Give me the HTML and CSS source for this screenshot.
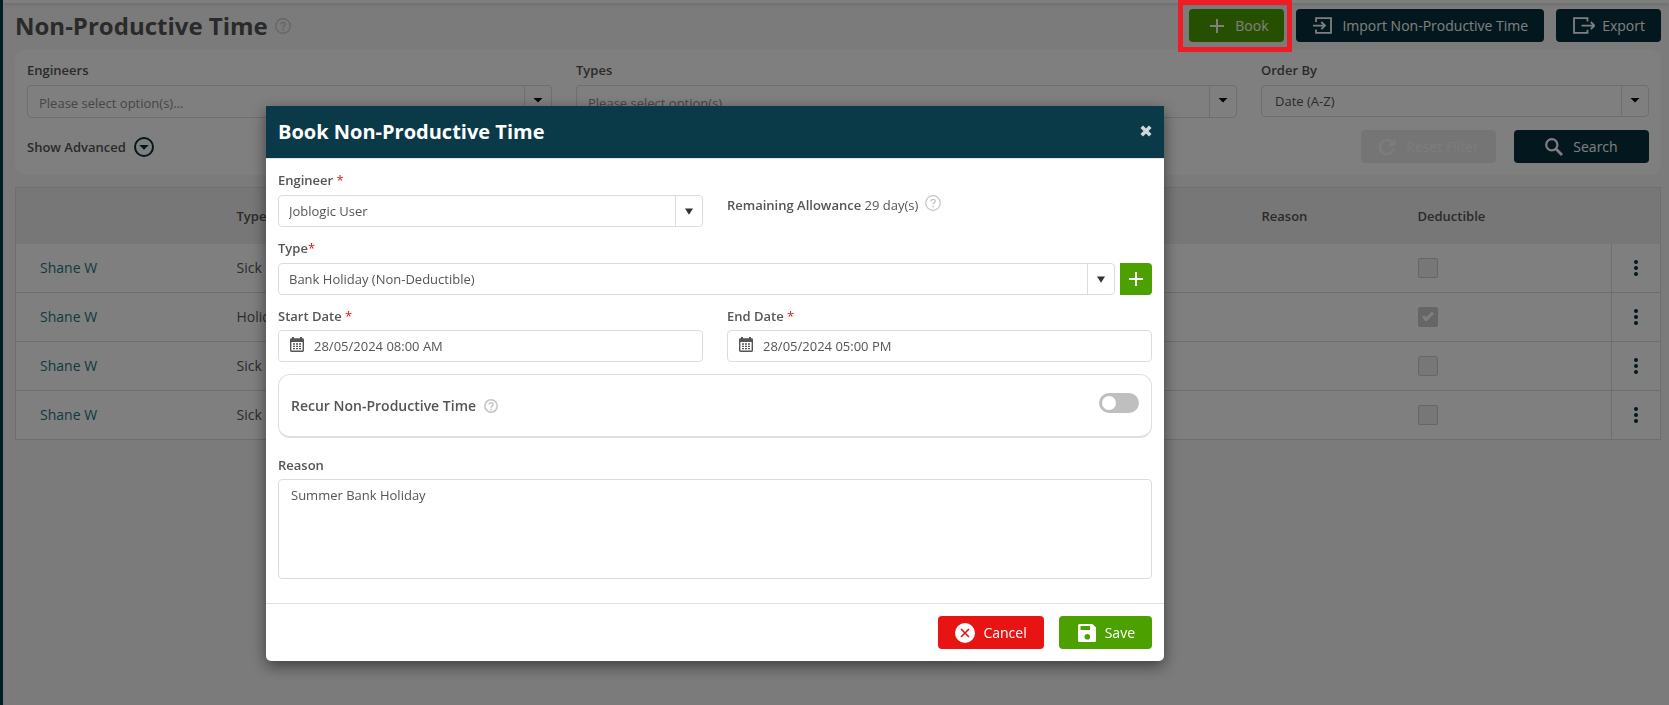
FILE: index.html
```html
<!DOCTYPE html>
<html lang="en">
<head>
<meta charset="utf-8">
<meta name="viewport" content="width=device-width, initial-scale=1">
<title>Non-Productive Time</title>
<link rel="stylesheet" href="styles.css">
</head>
<body>
<svg class="sprite" aria-hidden="true">
  <symbol id="help" viewBox="0 0 16 16"><circle cx="8" cy="8" r="7.3" fill="none" stroke="currentColor" stroke-width="1.2"/><path d="M5.9 6.4C5.9 3.6 10.2 3.7 10.2 6.3C10.2 7.9 8.1 7.8 8.1 9.6" fill="none" stroke="currentColor" stroke-width="1.3"/><circle cx="8.1" cy="11.6" r=".9" fill="currentColor"/></symbol>
  <symbol id="help-bold" viewBox="0 0 14 14"><circle cx="7" cy="7" r="6.2" fill="none" stroke="currentColor" stroke-width="1.5"/><path d="M5 5.6C5 3 9.1 3.1 9.1 5.5C9.1 6.9 7 7 7 8.8" fill="none" stroke="currentColor" stroke-width="1.4"/><circle cx="7" cy="10.5" r=".9" fill="currentColor"/></symbol>
  <symbol id="plus" viewBox="0 0 16 16"><path d="M8 1V15M1 8H15" fill="none" stroke="currentColor" stroke-width="2"/></symbol>
  <symbol id="caret-wide" viewBox="0 0 10 5"><path d="M.5 0H9.5L5 4.6Z" fill="currentColor"/></symbol>
  <symbol id="caret" viewBox="0 0 8 7"><path d="M0 .5H8L4 6.8Z" fill="currentColor"/></symbol>
  <symbol id="dots" viewBox="0 0 4 16"><circle cx="2" cy="2" r="2"/><circle cx="2" cy="8" r="2"/><circle cx="2" cy="14" r="2"/></symbol>
  <symbol id="calendar" viewBox="0 0 14 15"><path fill="currentColor" fill-rule="evenodd" d="M2 0H4V1.3H10V0H12V1.3H12.6Q14 1.3 14 2.7V13.6Q14 15 12.6 15H1.4Q0 15 0 13.6V2.7Q0 1.3 1.4 1.3H2ZM1.4 5V13.6H12.6V5Z"/><path d="M3 7H5M6 7H8M9 7H11M3 9.3H5M6 9.3H8M9 9.3H11M3 11.6H5M6 11.6H8M9 11.6H11" stroke="currentColor" stroke-width="1.3"/></symbol>
</svg>

<div class="page">
  <div class="topbar"></div>
  <main class="content">
    <header class="heading">
      <h1 class="heading-title">Non-Productive Time</h1>
      <svg class="icon-help heading-help"><use href="#help"/></svg>
      <div class="heading-actions">
        <span class="highlighted"><button class="btn btn-green btn-book" type="button"><svg class="icon-plus"><use href="#plus"/></svg>Book</button></span>
        <button class="btn btn-navy" type="button">
          <svg class="icon-import" viewBox="0 0 20 18"><path d="M4 5V1.2H19V15.8H4V12.5M1 8.6H12.5M9.3 5L13 8.6L9.3 12.2" fill="none" stroke="currentColor" stroke-width="1.8"/></svg>Import Non-Productive Time</button>
        <button class="btn btn-navy btn-export" type="button">
          <svg class="icon-export" viewBox="0 0 23 18"><path d="M15.5 4.6V1.2H2V15.8H15.5V12.7M9.5 8.6H22M18.8 5L22.3 8.6L18.8 12.2" fill="none" stroke="currentColor" stroke-width="1.8"/></svg>Export</button>
      </div>
    </header>

    <form class="filters">
      <div class="filter-grid">
        <div class="field">
          <label class="label" for="engineers">Engineers</label>
          <div class="select select-multi"><select id="engineers" class="control placeholder"><option>Please select option(s)...</option></select><span class="arrow"><svg class="icon-caret-wide"><use href="#caret-wide"/></svg></span></div>
        </div>
        <div class="field">
          <label class="label" for="types">Types</label>
          <div class="select select-multi"><select id="types" class="control placeholder"><option>Please select option(s)...</option></select><span class="arrow"><svg class="icon-caret-wide"><use href="#caret-wide"/></svg></span></div>
        </div>
        <div class="field">
          <label class="label" for="order">Order By</label>
          <div class="select"><select id="order" class="control"><option>Date (A-Z)</option></select><span class="arrow"><svg class="icon-caret-wide"><use href="#caret-wide"/></svg></span></div>
        </div>
      </div>
      <div class="filter-actions">
        <button class="advanced" type="button">Show Advanced<svg class="icon-advanced" viewBox="0 0 20 20"><circle cx="10" cy="10" r="9" fill="none" stroke="currentColor" stroke-width="2"/><path d="M5.2 8H14.8L10 12.8Z" fill="currentColor"/></svg></button>
        <button class="btn btn-wide btn-disabled" type="button" disabled>
          <svg class="icon-18" viewBox="0 0 18 18"><path d="M14.6 5A7 7 0 1 0 15.6 11" fill="none" stroke="currentColor" stroke-width="2.6"/><path d="M17.5 .5V8H10Z" fill="currentColor"/></svg>Reset Filter</button>
        <button class="btn btn-wide btn-navy btn-search" type="button">
          <svg class="icon-18" viewBox="0 0 18 18"><circle cx="6.8" cy="6.8" r="5.6" fill="none" stroke="currentColor" stroke-width="2.2"/><path d="M10.8 10.8L17 17" fill="none" stroke="currentColor" stroke-width="2.8"/></svg>Search</button>
      </div>
    </form>

    <table class="grid">
      <colgroup><col class="col-name"><col><col class="col-reason"><col class="col-deduct"><col class="col-menu"></colgroup>
      <thead><tr><th></th><th>Type</th><th>Reason</th><th>Deductible</th><th></th></tr></thead>
      <tbody>
        <tr><td><a class="link" href="#">Shane W</a></td><td>Sick</td><td></td><td><input class="check" type="checkbox" aria-label="Deductible" disabled></td><td class="menu"><button class="dots" type="button" aria-label="Actions"><svg class="icon-dots"><use href="#dots"/></svg></button></td></tr>
        <tr><td><a class="link" href="#">Shane W</a></td><td>Holiday</td><td></td><td><input class="check" type="checkbox" aria-label="Deductible" checked disabled></td><td class="menu"><button class="dots" type="button" aria-label="Actions"><svg class="icon-dots"><use href="#dots"/></svg></button></td></tr>
        <tr><td><a class="link" href="#">Shane W</a></td><td>Sick</td><td></td><td><input class="check" type="checkbox" aria-label="Deductible" disabled></td><td class="menu"><button class="dots" type="button" aria-label="Actions"><svg class="icon-dots"><use href="#dots"/></svg></button></td></tr>
        <tr><td><a class="link" href="#">Shane W</a></td><td>Sick</td><td></td><td><input class="check" type="checkbox" aria-label="Deductible" disabled></td><td class="menu"><button class="dots" type="button" aria-label="Actions"><svg class="icon-dots"><use href="#dots"/></svg></button></td></tr>
      </tbody>
    </table>
  </main>
</div>

<div class="backdrop">
  <form class="modal" role="dialog" aria-labelledby="modal-title">
    <header class="modal-head">
      <h2 class="modal-title" id="modal-title">Book Non-Productive Time</h2>
      <button class="close" type="button" aria-label="Close"><svg class="icon-close" viewBox="0 0 12 12"><path d="M3 3L9 9M9 3L3 9" stroke="currentColor" stroke-width="3.6" stroke-linecap="square"/></svg></button>
    </header>
    <div class="modal-body">
      <div class="columns">
        <div class="field">
          <label class="label" for="engineer">Engineer <span class="req">*</span></label>
          <div class="select"><select id="engineer" class="control"><option>Joblogic User</option></select><span class="arrow"><svg class="icon-caret"><use href="#caret"/></svg></span></div>
        </div>
        <p class="allowance"><span><b class="strong">Remaining Allowance</b> 29 day(s)</span><svg class="icon-help"><use href="#help"/></svg></p>
      </div>
      <div class="field">
        <label class="label" for="type">Type<span class="req">*</span></label>
        <div class="type-row">
          <div class="select"><select id="type" class="control"><option>Bank Holiday (Non-Deductible)</option></select><span class="arrow"><svg class="icon-caret"><use href="#caret"/></svg></span></div>
          <button class="add" type="button" aria-label="Add type"><svg class="icon-plus"><use href="#plus"/></svg></button>
        </div>
      </div>
      <div class="columns">
        <div class="field">
          <label class="label label-tight" for="start">Start Date <span class="req">*</span></label>
          <div class="date"><svg class="icon-calendar"><use href="#calendar"/></svg><input id="start" class="date-input" type="text" value="28/05/2024 08:00 AM"></div>
        </div>
        <div class="field">
          <label class="label label-tight" for="end">End Date <span class="req">*</span></label>
          <div class="date"><svg class="icon-calendar"><use href="#calendar"/></svg><input id="end" class="date-input" type="text" value="28/05/2024 05:00 PM"></div>
        </div>
      </div>
      <div class="recur">
        <label class="recur-label" for="recur">Recur Non-Productive Time</label>
        <svg class="icon-help-small"><use href="#help-bold"/></svg>
        <input id="recur" class="toggle" type="checkbox" role="switch">
      </div>
      <div class="field">
        <label class="label label-tight" for="reason">Reason</label>
        <textarea id="reason" class="textarea">Summer Bank Holiday</textarea>
      </div>
    </div>
    <footer class="modal-foot">
      <button class="btn btn-red" type="button"><svg class="icon-cancel" viewBox="0 0 20 20"><circle cx="10" cy="10" r="10" fill="#fff"/><path d="M6 6L14 14M14 6L6 14" stroke="#e81414" stroke-width="1.7"/></svg>Cancel</button>
      <button class="btn btn-green btn-save" type="submit"><svg class="icon-18" viewBox="0 0 18 18"><path fill="#fff" fill-rule="evenodd" d="M1.5 0H14.5L18 3.5V16.5Q18 18 16.5 18H1.5Q0 18 0 16.5V1.5Q0 0 1.5 0ZM2.5 2V6H12V2ZM9.3 10A2.8 2.8 0 1 0 9.3 15.6A2.8 2.8 0 1 0 9.3 10Z"/></svg>Save</button>
    </footer>
  </form>
</div>
</body>
</html>
```
FILE: styles.css
```css
*, *::before, *::after { box-sizing: border-box; }

body {
  margin: 0;
  background: #f7f7f7;
  color: #555;
  font: 13px/20px "Open Sans", "Noto Sans", sans-serif;
}
button, input, select, textarea { font: inherit; color: inherit; margin: 0; }
button { cursor: pointer; }
svg { display: block; flex: none; }
.sprite { position: absolute; width: 0; height: 0; }

.page { min-height: 100vh; border-left: 3px solid #0a3948; }
.topbar { height: 3px; background: #fff; box-shadow: 0 0 5px rgba(0, 0, 0, .25); }
.content { padding: 6px 8px 24px 12px; }

/* Heading */
.heading { display: flex; align-items: center; height: 33px; }
.heading-title { margin: 0; font-size: 24px; line-height: 32px; font-weight: 700; }
.heading-help { margin-left: 7px; }
.heading-actions { display: flex; gap: 12px; margin-left: auto; }
.highlighted { position: relative; }
.highlighted::after {
  content: "";
  position: absolute;
  inset: -9px -8px -10px -11px;
  border: 5px solid #ee1c25;
  z-index: 20;
  pointer-events: none;
}

/* Buttons */
.btn {
  display: flex;
  align-items: center;
  justify-content: center;
  gap: 10px;
  height: 33px;
  padding: 0 16px;
  border: 0;
  border-radius: 4px;
  color: #fff;
  font-size: 14px;
}
.btn-green { background: #4ca000; }
.btn-navy { background: #052f3d; }
.btn-red { padding: 0 17px; background: #e81414; gap: 8px; }
.btn-save { padding: 0 17px 0 19px; gap: 9px; }
.btn-book { width: 95px; padding-left: 20px; }
.btn-export { gap: 7px; }
.btn-wide { width: 135px; }
.btn-disabled { background: #eaeaea; color: #f8f8f8; }
.icon-plus { width: 16px; height: 16px; }
.icon-import { width: 20px; height: 18px; }
.icon-export { width: 23px; height: 18px; }
.icon-18 { width: 18px; height: 18px; }
.icon-cancel { width: 20px; height: 20px; }
.icon-help { width: 16px; height: 16px; color: #c4c4c4; }
.icon-help-small { width: 14px; height: 14px; color: #c4c4c4; }

/* Fields */
.label { display: block; margin-bottom: 5px; font-weight: 600; line-height: 20px; }
.label-tight { margin-bottom: 4px; }
.req { color: #e81414; font-weight: 400; }
.select, .date {
  background: #fff;
  border: 1px solid #dcdcdc;
  border-radius: 4px;
  height: 32px;
}
.select { display: grid; grid-template: 100% / 1fr; }
.select-multi { height: 33px; }
.control {
  grid-area: 1 / 1;
  width: 100%;
  height: 100%;
  padding: 0 36px 0 10px;
  border: 0;
  border-radius: 4px;
  background: transparent;
  appearance: none;
}
.placeholder { padding-top: 2px; color: #8c8c8c; }
.arrow {
  grid-area: 1 / 1;
  justify-self: end;
  display: flex;
  align-items: center;
  justify-content: center;
  width: 27px;
  padding-right: 1px;
  border-left: 1px solid #dcdcdc;
  pointer-events: none;
  color: #333;
}
.icon-caret { width: 8px; height: 7px; }
.icon-caret-wide { width: 10px; height: 5px; margin-bottom: 2px; color: #000; }

/* Filters */
.filters {
  margin-top: 7px;
  padding: 11px 12px 12px;
  border-radius: 12px;
  background: #fff;
}
.filter-grid { display: grid; grid-template-columns: 525fr 661fr 388fr; gap: 24px; }
.filter-grid .control { padding-left: 11px; }
.filter-grid #order { padding-left: 13px; }
.filter-actions { display: flex; align-items: center; gap: 18px; margin-top: 12px; }
.advanced {
  display: flex;
  align-items: center;
  gap: 8px;
  margin-right: auto;
  padding: 0;
  border: 0;
  background: none;
  font-weight: 600;
}
.icon-advanced { width: 20px; height: 20px; color: #052f3d; }

/* Records */
.grid {
  width: 100%;
  margin-top: 12px;
  border-collapse: collapse;
  table-layout: fixed;
  background: #fff;
  border: 1px solid #dcdcdc;
  font-size: 14px;
}
.col-name { width: 197px; }
.col-reason { width: 156px; }
.col-deduct { width: 218px; }
.col-menu { width: 49px; }
.grid th {
  height: 56px;
  padding: 0 24px;
  background: #efefef;
  font-size: 13px;
  font-weight: 600;
  text-align: left;
}
.grid td { height: 49px; padding: 0 24px; border-bottom: 1px solid #dcdcdc; }
.grid .menu { padding: 0; border-left: 1px solid #dcdcdc; }
.link { color: #1d7480; text-decoration: none; }
.check {
  display: block;
  width: 20px;
  height: 20px;
  border: 1px solid #ccc;
  border-radius: 2px;
  background: #efefef;
  appearance: none;
}
.check:checked { background: #ccc; }
.check:checked::after {
  content: "";
  display: block;
  width: 6px;
  height: 11px;
  margin: 2px 0 0 6px;
  border: solid #fff;
  border-width: 0 3px 3px 0;
  transform: rotate(45deg);
}
.dots { display: block; margin: 0 auto; padding: 8px; border: 0; background: none; }
.icon-dots { width: 4px; height: 16px; fill: #052f3d; }

/* Dialog */
.backdrop {
  position: fixed;
  inset: 0;
  z-index: 10;
  padding: 106px 24px 24px 266px;
  overflow: auto;
  background: rgba(0, 0, 0, .5);
}
.modal {
  max-width: 898px;
  background: #fff;
  border-radius: 0 0 5px 5px;
  box-shadow: 0 5px 15px rgba(0, 0, 0, .5);
}
.modal-head {
  display: flex;
  align-items: center;
  justify-content: space-between;
  height: 53px;
  padding: 0 12px;
  background: #0a3948;
  border-bottom: 1px solid #e5e5e5;
  color: #fff;
}
.modal-title { margin: 0; font-size: 20px; line-height: 24px; font-weight: 700; }
.close { padding: 0 0 2px; border: 0; background: none; color: #ced7da; }
.icon-close { width: 12px; height: 12px; }
.modal-body { display: grid; gap: 11px; padding: 11px 12px 24px; }
.columns { display: grid; grid-template-columns: 1fr 1fr; gap: 24px; }
.allowance { display: flex; gap: 7px; margin: 0; padding-top: 25px; }
.strong { font-weight: 600; }
.type-row { display: grid; grid-template-columns: 1fr 32px; gap: 5px; }
.add {
  display: grid;
  place-items: center;
  padding: 0;
  border: 0;
  border-radius: 0 4px 4px 0;
  background: #4ca000;
  color: #fff;
}
.date { display: flex; align-items: center; gap: 10px; padding-left: 11px; }
.date-input { flex: 1; min-width: 0; padding: 0; border: 0; background: none; outline: 0; }
.icon-calendar { width: 14px; height: 15px; margin-bottom: 4px; }
.recur {
  display: flex;
  align-items: center;
  height: 64px;
  margin: 1px 0 6px;
  padding: 0 12px;
  border: 1px solid #dfdfdf;
  border-bottom-width: 2px;
  border-radius: 12px;
}
.recur-label { margin-right: 8px; font-size: 14px; font-weight: 600; }
.toggle {
  width: 40px;
  height: 20px;
  margin: 0 0 6px auto;
  padding: 3px;
  border-radius: 10px;
  background: #bfbfbf;
  appearance: none;
}
.toggle::before {
  content: "";
  display: block;
  width: 14px;
  height: 14px;
  border-radius: 50%;
  background: #fff;
}
.toggle:checked { background: #4ca000; }
.toggle:checked::before { margin-left: auto; }
.textarea {
  display: block;
  width: 100%;
  height: 100px;
  padding: 5px 12px;
  border: 1px solid #dcdcdc;
  border-radius: 4px;
  background: #fff;
  resize: none;
}
.modal-foot {
  display: flex;
  justify-content: flex-end;
  gap: 15px;
  padding: 12px;
  border-top: 1px solid #e0e0e0;
}
```
